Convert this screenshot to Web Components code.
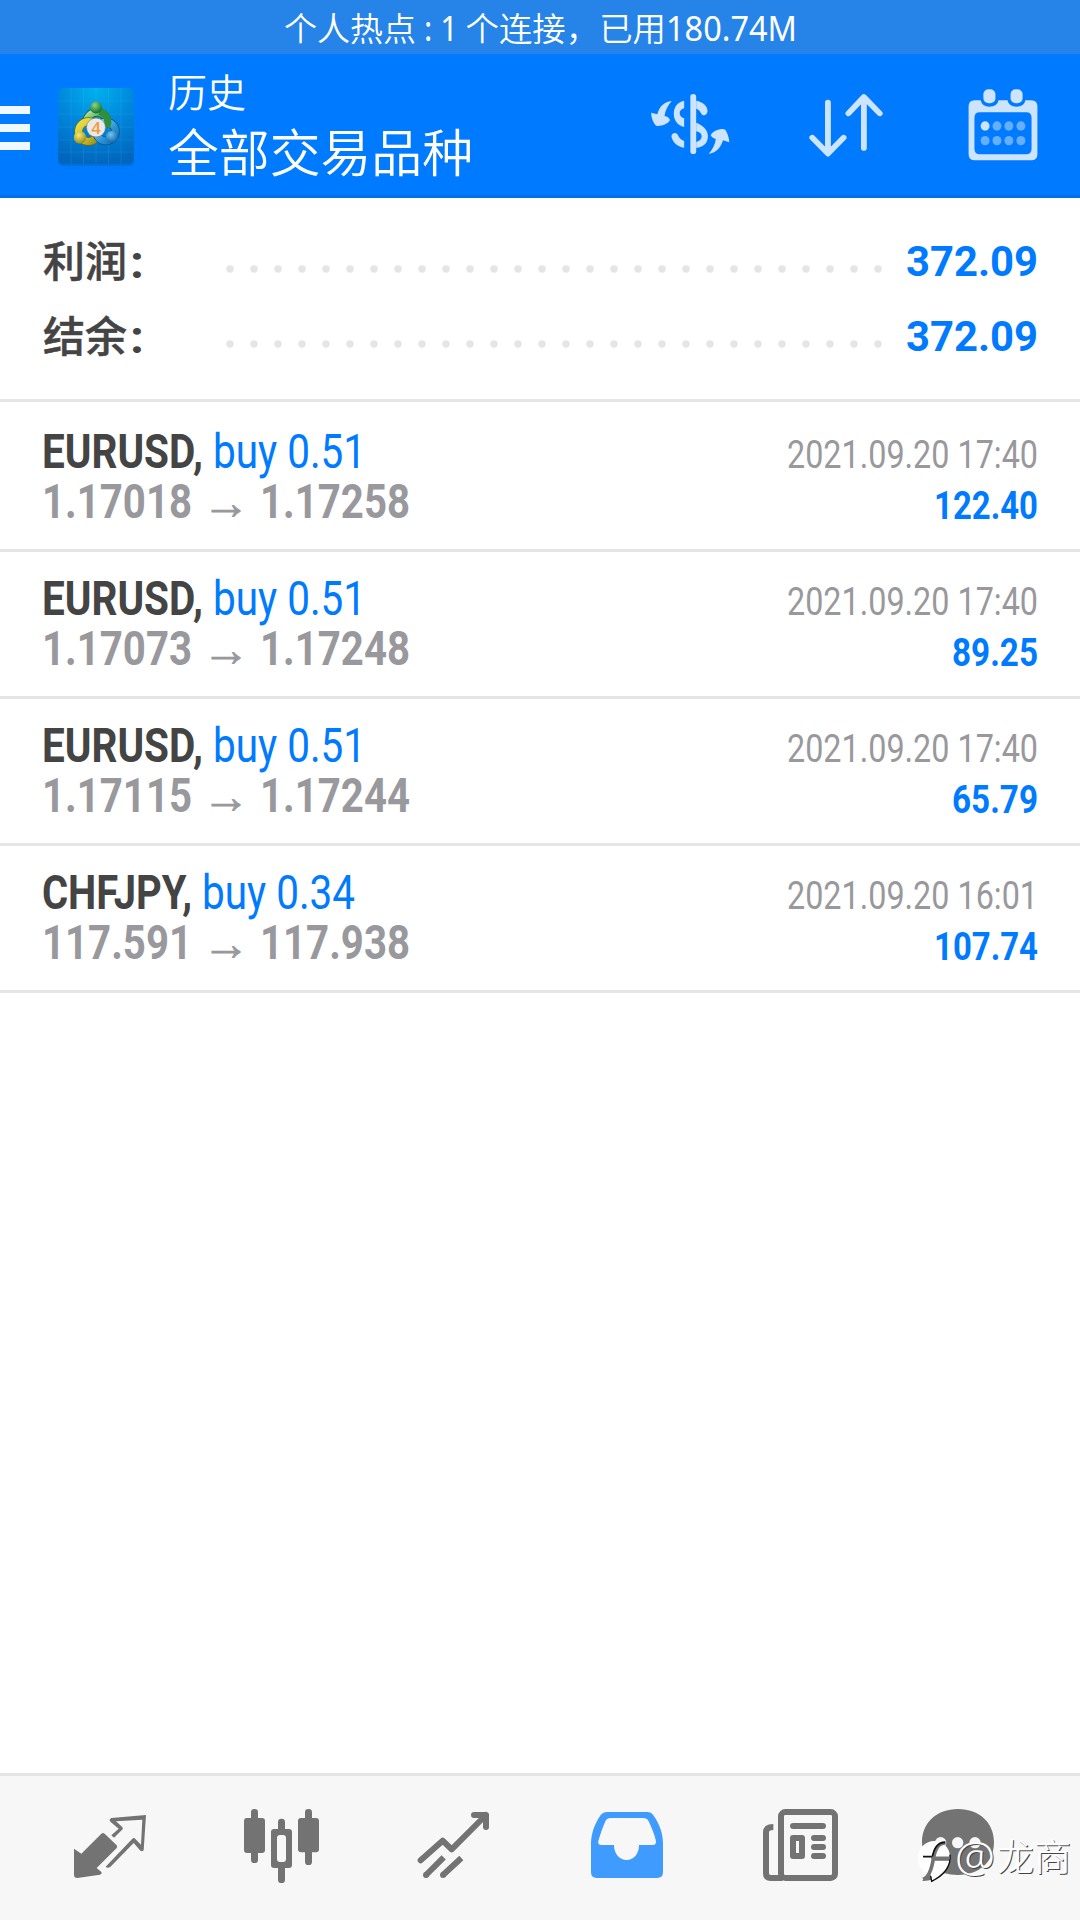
<!DOCTYPE html>
<html lang="zh-CN">
<head>
<meta charset="utf-8">
<title>历史</title>
<style>
html,body{margin:0;padding:0}
body{width:1080px;height:1920px;overflow:hidden;background:#fff}
</style>
</head>
<body>
<history-app></history-app>
<script>
const define=(name,html,setup)=>{
  const t=document.createElement('template');t.innerHTML=html;
  customElements.define(name,class extends HTMLElement{
    constructor(){super();this.attachShadow({mode:'open'}).append(t.content.cloneNode(true));}
    connectedCallback(){if(setup)setup(this,this.shadowRoot);}
  });
};

/* Single line of text condensed to a given width: w = advance width, size = font size, lh = line height */
define('fit-text',`<style>
:host{display:block;flex:none;white-space:pre}
span{display:inline-block;transform-origin:0 50%;white-space:pre}
</style><span><slot></slot></span>`,(el,r)=>{
  const s=r.querySelector('span'),w=+el.getAttribute('w');
  el.style.width=w+'px';
  el.style.fontSize=el.getAttribute('size')+'px';
  el.style.lineHeight=el.getAttribute('lh')+'px';
  el.style.height=el.getAttribute('lh')+'px';
  s.style.transform=`scaleX(${w/s.getBoundingClientRect().width})`;
});

define('status-bar',`<style>
:host{display:flex;height:54px;background:#2684e9;color:#fff;box-sizing:border-box;padding:0 0 0 284px;font-family:"Noto Sans","Noto Sans CJK SC",sans-serif;font-weight:400}
.c{font-family:"Noto Sans CJK SC",sans-serif;font-weight:350}
</style>
<fit-text class="c" w="132" size="33" lh="54">个人热点</fit-text>
<fit-text w="42" size="34" lh="56"> : 1</fit-text>
<fit-text class="c" w="208" size="33" lh="54"> 个连接，已用</fit-text>
<fit-text w="131" size="34" lh="56">180.74M</fit-text>`);

define('app-logo',`<style>:host{display:block;flex:none}svg{display:block}</style>
<svg width="82" height="82" viewBox="0 0 82 82">
<defs>
<radialGradient id="b" cx=".5" cy="0" r="1"><stop offset="0" stop-color="#00b2ee"/><stop offset=".5" stop-color="#0087dc"/><stop offset="1" stop-color="#0067bd"/></radialGradient>
<linearGradient id="g" x2="1" y2="1"><stop stop-color="#b9e5a6"/><stop offset=".5" stop-color="#4bab49"/><stop offset="1" stop-color="#248038"/></linearGradient>
<linearGradient id="y" x2="1" y2="1"><stop stop-color="#e9df4e"/><stop offset=".6" stop-color="#d0bd24"/><stop offset="1" stop-color="#968c25"/></linearGradient>
<linearGradient id="u" x2="1" y2="1"><stop stop-color="#8ed5f5"/><stop offset=".6" stop-color="#2b96d5"/><stop offset="1" stop-color="#1771b5"/></linearGradient>
<radialGradient id="gb" cx=".4" cy=".3" r=".7"><stop stop-color="#8fd486"/><stop offset="1" stop-color="#12722b"/></radialGradient>
<radialGradient id="yb" cx=".4" cy=".3" r=".7"><stop stop-color="#f5ed72"/><stop offset="1" stop-color="#978d1d"/></radialGradient>
<radialGradient id="ub" cx=".4" cy=".3" r=".7"><stop stop-color="#75c5ef"/><stop offset="1" stop-color="#0c62a9"/></radialGradient>
</defs>
<rect x="3" y="5" width="76" height="76" rx="5" fill="#0358ac" opacity=".35"/>
<rect x="3" y="3" width="76" height="76" rx="5" fill="url(#b)"/>
<path d="M28.500 3v76M41 3v76M53.500 3v76M66 3v76M16 3v76M3 29h76M3 42h76M3 55h76M3 67h76M3 16h76" stroke="#55d0ff" stroke-opacity=".14" stroke-width="1"/>
<g fill="none">
<path d="M31.500 39a10.500 10.500 0 1 1 20 3" stroke="#116129" stroke-width="8.500"/>
<path d="M31.500 39a10.500 10.500 0 1 1 20 3" stroke="url(#g)" stroke-width="7"/>
<circle cx="33.500" cy="46.500" r="10" stroke="#6f6b12" stroke-width="8.500"/>
<circle cx="33.500" cy="46.500" r="10" stroke="url(#y)" stroke-width="7"/>
<circle cx="51" cy="46.500" r="9.500" stroke="#0a4f8d" stroke-width="8.500"/>
<circle cx="51" cy="46.500" r="9.500" stroke="url(#u)" stroke-width="7"/>
<path d="M44 26.500a10.500 10.500 0 0 1 7.500 15.500" stroke="#2f8f3d" stroke-width="7"/>
</g>
<circle cx="41" cy="22.500" r="5.900" fill="url(#gb)"/><circle cx="25" cy="52.500" r="6.200" fill="url(#yb)"/><circle cx="57" cy="52" r="6.200" fill="url(#ub)"/>
<circle cx="41" cy="42.500" r="9.500" fill="#e9e9ec" stroke="#777" stroke-width=".6"/>
<text x="41" y="48.500" text-anchor="middle" font-family="Open Sans,sans-serif" font-weight="600" font-size="17" fill="#f59a32">4</text>
</svg>`);

define('tool-icon',`<style>:host{display:block;flex:none}svg{display:none}
:host([name=symbol]) .symbol,:host([name=sort]) .sort,:host([name=calendar]) .calendar{display:block}</style>
<svg class="symbol" width="86" height="70" viewBox="310 270 250 210" preserveAspectRatio="none" fill="#cce4ff">
<rect x="436" y="282" width="17" height="180" rx="8.500"/>
<path d="M418 302C396 308 388 322 388 342C388 362 399 376 418 381V355C409 352 405 346 405 339C405 333 409 328 418 325Z"/>
<path d="M453 302C473 306 486 318 486 333C484 349 471 349 466 338C463 331 459 328 453 326Z"/>
<path d="M453 368C472 376 487 388 487 409C487 431 473 442 453 444V426C464 423 469 417 469 409C469 401 463 397 453 394Z"/>
<path d="M418 443C397 439 386 428 381 410C381 397 396 395 400 406C404 415 409 419 418 423Z"/>
<path d="M382 303C360 305 346 319 340 343L322 338C322 353 328 366 334 375Q338 380 347 377C359 376 371 371 377 360C373 352 368 349 361 348C363 331 371 316 382 303Z"/>
<path d="M489 462C510 458 523 446 531 421L549 427C549 413 543 398 538 390Q534 386 526 387C512 389 501 395 495 405C499 413 504 415 510 417C508 435 500 449 489 462Z"/>
</svg>
<svg class="sort" width="86" height="70" viewBox="764 270 250 210" preserveAspectRatio="none" fill="none" stroke="#cce4ff" stroke-width="17" stroke-linecap="round" stroke-linejoin="round">
<path d="M836.500 308V460M791 413L836.500 461L882 413M941 444V292M896 340L941 291L987 340"/>
</svg>
<svg class="calendar" width="86" height="76" viewBox="1218 260 250 228" preserveAspectRatio="none">
<path fill="#cce4ff" fill-rule="evenodd" d="M1261 300H1278Q1282 319 1303 319Q1327 319 1330 300H1356Q1360 319 1382 319Q1405 319 1408 300H1425Q1443 300 1443 318V462Q1443 480 1425 480H1261Q1243 480 1243 462V318Q1243 300 1261 300ZM1276 336Q1260 336 1260 352V446Q1260 462 1276 462H1410Q1426 462 1426 446V352Q1426 336 1410 336Z"/>
<rect x="1286" y="267" width="35" height="42" rx="15" fill="#cce4ff"/><rect x="1365" y="267" width="35" height="42" rx="15" fill="#cce4ff"/>
<ellipse cx="1291" cy="377" rx="13" ry="14" fill="#cce4ff"/>
<g fill="#66afff"><ellipse cx="1325.500" cy="377" rx="13" ry="14"/><ellipse cx="1360" cy="377" rx="13" ry="14"/><ellipse cx="1395" cy="377" rx="13" ry="14"/><ellipse cx="1291" cy="421" rx="13" ry="14"/><ellipse cx="1325.500" cy="421" rx="13" ry="14"/><ellipse cx="1360" cy="421" rx="13" ry="14"/><ellipse cx="1395" cy="421" rx="13" ry="14"/></g>
</svg>`);

define('app-header',`<style>
:host{display:flex;height:144px;box-sizing:border-box;border-bottom:3px solid #0070e6;background:#007aff;color:#fff;font-family:"Noto Sans CJK SC",sans-serif;font-weight:350}
.menu{display:flex;flex-direction:column;gap:10px;width:30px;padding-top:52px;margin-right:25px}
.menu i{height:8px;background:#eff7ff}
app-logo{margin-top:31px}
.titles{width:483px;padding:11px 0 0 31px;box-sizing:border-box}
.tools{display:flex;align-items:flex-start;gap:70px;margin-left:27px;padding-top:36px}
tool-icon[name=calendar]{margin:-3px 0 0 .5px}
</style>
<div class="menu"><i></i><i></i><i></i></div>
<app-logo></app-logo>
<div class="titles"><fit-text w="78" size="39" lh="50">历史</fit-text><fit-text w="305" size="51" lh="70">全部交易品种</fit-text></div>
<div class="tools"><tool-icon name="symbol"></tool-icon><tool-icon name="sort"></tool-icon><tool-icon name="calendar"></tool-icon></div>`);

define('summary-row',`<style>
:host{display:flex;height:75px;padding-left:42.500px}
.label{color:#444;font-family:"Noto Sans CJK SC",sans-serif;font-weight:500;-webkit-text-stroke:.5px #444}
.colon{color:#444;font-family:Roboto,sans-serif;font-weight:700;margin:3px 0 0 3px}
svg{display:block;margin-left:81.500px;flex:none}
.value{color:#007aff;font-family:Roboto,sans-serif;font-weight:700;margin:2.500px 0 0 21px}
</style>
<fit-text class="label" w="84" size="42" lh="60"><slot name="label"></slot></fit-text><fit-text class="colon" w="14" size="46" lh="60">:</fit-text>
<svg width="660" height="75"><path d="M5 40H656" stroke="#e5e5e5" stroke-width="7.400" stroke-linecap="round" stroke-dasharray="0 24"/></svg>
<fit-text class="value" w="132" size="42" lh="60"><slot></slot></fit-text>`);

define('account-summary',`<style>:host{display:block;height:204px;box-sizing:border-box;padding-top:31px;border-bottom:3px solid #e5e5e5}</style><slot></slot>`);

define('deal-row',`<style>
:host{display:flex;justify-content:space-between;height:147px;box-sizing:border-box;border-bottom:3px solid #e5e5e5;padding:21px 42px 0;font-family:Roboto,sans-serif}
.line{display:flex}
.sym{color:#444;font-weight:700}.buy{color:#007aff;margin-left:10px}
.price{color:#98989d;font-weight:700}
.arrow{color:#98989d;width:68px;text-align:center;font:48px/51px "Liberation Sans",sans-serif;height:51px;-webkit-text-stroke:.7px #98989d}
.right{display:flex;flex-direction:column;align-items:flex-end;padding-top:3px}
.date{color:#98989d}.profit{color:#007aff;font-weight:700}
</style><div><div class="line"><fit-text class="sym" size="48" lh="51"></fit-text><fit-text class="buy" size="48" lh="51"></fit-text></div>
<div class="line"><fit-text class="price from" w="150" size="48" lh="50"></fit-text><span class="arrow">→</span><fit-text class="price to" w="150" size="48" lh="50"></fit-text></div></div>
<div class="right"><fit-text class="date" w="251" size="39.500" lh="51"></fit-text><fit-text class="profit" size="39.500" lh="51"></fit-text></div>`,(el,r)=>{
  const fill=(sel,text,w)=>{
    const f=r.querySelector(sel);f.textContent=text;if(w)f.setAttribute('w',w);
    f.replaceWith(f.cloneNode(true));
  };
  const a=n=>el.getAttribute(n);
  fill('.sym',a('symbol')+',',a('sw'));fill('.buy',a('order'),a('ow'));
  fill('.from',a('from'));fill('.to',a('to'));fill('.date',a('date'));fill('.profit',a('profit'),a('pw'));
});

define('nav-bar',`<style>
:host{display:grid;grid-template-columns:repeat(6,180px);height:147px;box-sizing:border-box;border-top:3px solid #e4e4e4;background:#f7f7f7;margin-top:auto;color:#737373}
svg{display:block;width:180px;height:144px;fill:currentColor}
.on{color:#409bff}
</style>
<svg viewBox="0 48 540 432"><path d="M222 266L244 281L304 221Q309 217 314 221L350 256Q353 260 350 264L290 324L305 337Q306 343 300 344L232 354Q222 354 222 345Z"/>
<path fill-rule="evenodd" d="M317 320Q320 325 330 322L401 249L420 271Q425 277 431 271L438 165L334 174Q326 178 331 185L356 206L334 226L342 233L368 208Q370 204 366 200L348 184L427 179L423 254L404 235Q401 232 397 236Z"/></svg>
<svg viewBox="540 48 540 432"><rect x="753" y="147" width="21" height="162" rx="10"/><rect x="732" y="174" width="63" height="105" rx="9"/><rect x="834" y="176" width="21" height="193" rx="10"/><rect x="813" y="207" width="63" height="117" rx="9"/><rect x="831" y="225" width="27" height="81" rx="9" fill="#f7f7f7"/><rect x="915" y="147" width="21" height="168" rx="10"/><rect x="894" y="174" width="63" height="103" rx="9"/></svg>
<svg viewBox="0 48 540 432"><g fill="none" stroke="currentColor" stroke-width="18" stroke-linecap="round" stroke-linejoin="round"><path d="M182 301L248 242L275 268L378 165M342 165H378V201"/><path d="M198 345h.1M249 345h.1"/><path d="M198 345L251 292M249 345L304 294" stroke-linecap="butt"/></g></svg>
<svg class="on" viewBox="540 48 540 432"><path fill-rule="evenodd" d="M740 156H862Q873 156 880 166C899 192 909 222 909 250V337Q909 354 892 354H710Q693 354 693 337V250C693 222 704 190 722 165Q729 156 740 156ZM753 174Q741 174 736 184Q725 209 715 242Q713 255 724 255H762C762 281 778 300 800 300C822 300 837 281 837 255H878Q889 255 888 243C884 226 875 203 866 184Q861 174 849 174Z"/></svg>
<svg viewBox="0 48 540 432"><g fill="none" stroke="currentColor" stroke-width="18"><rect x="183" y="156" width="162" height="198" rx="13"/><path d="M160 201Q138 201 138 217V340Q138 354 152 354H188"/></g><rect x="210" y="189" width="108" height="18" rx="9"/><path fill-rule="evenodd" d="M219 225H246Q255 225 255 234V288Q255 297 246 297H219Q210 297 210 288V234Q210 225 219 225ZM228 243V279H237V243Z"/><rect x="273" y="225" width="45" height="18" rx="9"/><rect x="273" y="252" width="45" height="18" rx="9"/><rect x="273" y="279" width="45" height="18" rx="9"/></svg>
<svg viewBox="540 48 540 432"><path d="M714 147C779 147 822 189 822 247C822 305 779 345 714 345Q690 345 674 340Q645 363 606 363Q628 346 630 318Q606 288 606 247C606 189 649 147 714 147Z"/><g fill="#f7f7f7"><circle cx="662" cy="248" r="17"/><circle cx="713" cy="248" r="17"/><circle cx="765" cy="248" r="17"/></g></svg>`);

define('water-mark',`<style>
:host{position:absolute;left:915px;top:1836px;display:flex;align-items:flex-start;color:#fff;font-family:"Noto Sans CJK SC",sans-serif;font-weight:350;text-shadow:1px 1px .5px #444}
svg{display:block;flex:none}
.at{font-family:"Noto Sans",sans-serif;margin-top:-1px}
.name{margin:-2px 0 0 2px}
</style>
<svg width="40" height="50" viewBox="0 0 120 150"><path d="M58 15C84 15 105 36 105 62C105 94 82 114 50 134L47 116C22 108 9 92 9 64C9 36 32 15 58 15Z" fill="#fff"/><path d="M105 56C108 92 88 118 50 136L47 120" fill="none" stroke="#0a0a0a" stroke-width="4"/><path d="M92 21C68 20 60 42 55 68C50 100 42 124 24 130" fill="none" stroke="#737373" stroke-width="11"/><path d="M90 19C64 19 56 42 51 66M24 62H50" fill="none" stroke="#111" stroke-width="5"/><path d="M50 66H104" stroke="#737373" stroke-width="9"/><path d="M60 72H104" stroke="#222" stroke-width="3"/></svg>
<fit-text class="at" w="40" size="42" lh="42">@</fit-text><fit-text class="name" w="74" size="37" lh="42">龙商</fit-text>`);

define('history-app',`<style>
:host{display:flex;flex-direction:column;width:1080px;height:1920px;position:relative;overflow:hidden;background:#fff}
.list{padding-top:3px}
</style>
<status-bar></status-bar>
<app-header></app-header>
<account-summary>
<summary-row><span slot="label">利润</span>372.09</summary-row>
<summary-row><span slot="label">结余</span>372.09</summary-row>
</account-summary>
<div class="list">
<deal-row symbol="EURUSD" sw="161" order="buy 0.51" ow="153" from="1.17018" to="1.17258" date="2021.09.20 17:40" profit="122.40" pw="104"></deal-row>
<deal-row symbol="EURUSD" sw="161" order="buy 0.51" ow="153" from="1.17073" to="1.17248" date="2021.09.20 17:40" profit="89.25" pw="86"></deal-row>
<deal-row symbol="EURUSD" sw="161" order="buy 0.51" ow="153" from="1.17115" to="1.17244" date="2021.09.20 17:40" profit="65.79" pw="86"></deal-row>
<deal-row symbol="CHFJPY" sw="150" order="buy 0.34" ow="153" from="117.591" to="117.938" date="2021.09.20 16:01" profit="107.74" pw="104"></deal-row>
</div>
<nav-bar></nav-bar>
<water-mark></water-mark>`);
</script>
</body>
</html>
